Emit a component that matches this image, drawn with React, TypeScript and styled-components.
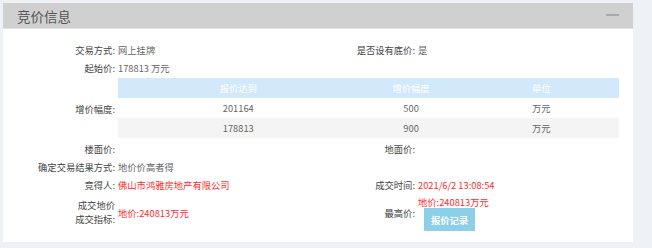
import styled, { createGlobalStyle } from "styled-components";

const GlobalStyle = createGlobalStyle`
  body {
    margin: 0;
    background: #eef2f6;
    font-family: "Noto Sans CJK SC", "Noto Sans", sans-serif;
  }
`;

const Page = styled.div`
  padding: 3px 19px 4px 3px;
`;

const Panel = styled.section`
  width: 630px;
  background: #fff;
`;

const PanelHeader = styled.header`
  display: flex;
  align-items: center;
  justify-content: space-between;
  height: 26px;
  padding: 0 14px 0 14px;
  background: #d0d0d0;
  border-bottom: 1px solid #e2e2e2;
  box-sizing: border-box;
`;

const PanelTitle = styled.h3`
  margin: 0;
  font-size: 13.5px;
  font-weight: 400;
  line-height: 26px;
  color: #555;
`;

const Collapse = styled.span`
  width: 13px;
  height: 2px;
  margin-top: -1px;
  background: #a9a9a9;
`;

const InfoGrid = styled.div`
  display: grid;
  grid-template-columns: 112px 181px 119px 1fr;
  align-items: center;
  padding: 12px 14px 10px 0;
  font-size: 9.3px;
  line-height: 18px;
`;

const Label = styled.div<{ $tight?: boolean }>`
  text-align: right;
  color: #444;
  white-space: nowrap;
  line-height: ${(p) => (p.$tight ? "13.6px" : "18px")};
`;

const Value = styled.div<{ $red?: boolean; $span?: number }>`
  padding-left: 3px;
  color: ${(p) => (p.$red ? "#ff2b2b" : "#666")};
  white-space: nowrap;
  grid-column: ${(p) => (p.$span ? `span ${p.$span}` : "auto")};
  min-height: 18px;
`;

const TableWrap = styled.div`
  grid-column: 2 / 5;
  margin: 1px 0 2px 3px;
`;

const PriceTable = styled.table`
  width: 100%;
  border-collapse: collapse;
  table-layout: fixed;
  text-align: center;
`;

const HeadCell = styled.th`
  height: 20px;
  padding: 0;
  background: #d2e8fb;
  color: #fff;
  font-weight: 400;
`;

const Row = styled.tr<{ $stripe?: boolean }>`
  background: ${(p) => (p.$stripe ? "#f4f4f4" : "#fff")};
`;

const Cell = styled.td`
  height: 20px;
  padding: 0;
  color: #666;
`;

const HighCell = styled.div`
  padding: 1px 0 1px 3px;
  display: flex;
  flex-direction: column;
  align-items: flex-start;
`;

const RedLine = styled.span`
  color: #ff2b2b;
  line-height: 14px;
`;

const RecordButton = styled.button`
  margin: -1px 0 0 6px;
  height: 23px;
  padding: 0 7px;
  border: none;
  background: #8bcfe9;
  color: #fff;
  font-family: inherit;
  font-size: 9.3px;
  font-weight: 700;
  cursor: pointer;
`;

const rows = [
  { price: "201164", step: "500", unit: "万元" },
  { price: "178813", step: "900", unit: "万元" },
];

export default function App() {
  return (
    <>
      <GlobalStyle />
      <Page>
        <Panel>
          <PanelHeader>
            <PanelTitle>竞价信息</PanelTitle>
            <Collapse />
          </PanelHeader>
          <InfoGrid>
            <Label>交易方式:</Label>
            <Value>网上挂牌</Value>
            <Label>是否设有底价:</Label>
            <Value>是</Value>

            <Label>起始价:</Label>
            <Value $span={3}>178813 万元</Value>

            <Label>增价幅度:</Label>
            <TableWrap>
              <PriceTable>
                <colgroup>
                  <col style={{ width: "48%" }} />
                  <col style={{ width: "21%" }} />
                  <col style={{ width: "31%" }} />
                </colgroup>
                <thead>
                  <tr>
                    <HeadCell>报价达到</HeadCell>
                    <HeadCell>增价幅度</HeadCell>
                    <HeadCell>单位</HeadCell>
                  </tr>
                </thead>
                <tbody>
                  {rows.map((r, i) => (
                    <Row key={r.price} $stripe={i % 2 === 1}>
                      <Cell>{r.price}</Cell>
                      <Cell>{r.step}</Cell>
                      <Cell>{r.unit}</Cell>
                    </Row>
                  ))}
                </tbody>
              </PriceTable>
            </TableWrap>

            <Label>楼面价:</Label>
            <Value />
            <Label>地面价:</Label>
            <Value />

            <Label>确定交易结果方式:</Label>
            <Value $span={3}>地价价高者得</Value>

            <Label>竞得人:</Label>
            <Value $red>佛山市鸿雅房地产有限公司</Value>
            <Label>成交时间:</Label>
            <Value $red>2021/6/2 13:08:54</Value>

            <Label $tight>
              成交地价
              <br />
              成交指标:
            </Label>
            <Value $red>地价:240813万元</Value>
            <Label>最高价:</Label>
            <HighCell>
              <RedLine>地价:240813万元</RedLine>
              <RecordButton>报价记录</RecordButton>
            </HighCell>
          </InfoGrid>
        </Panel>
      </Page>
    </>
  );
}
